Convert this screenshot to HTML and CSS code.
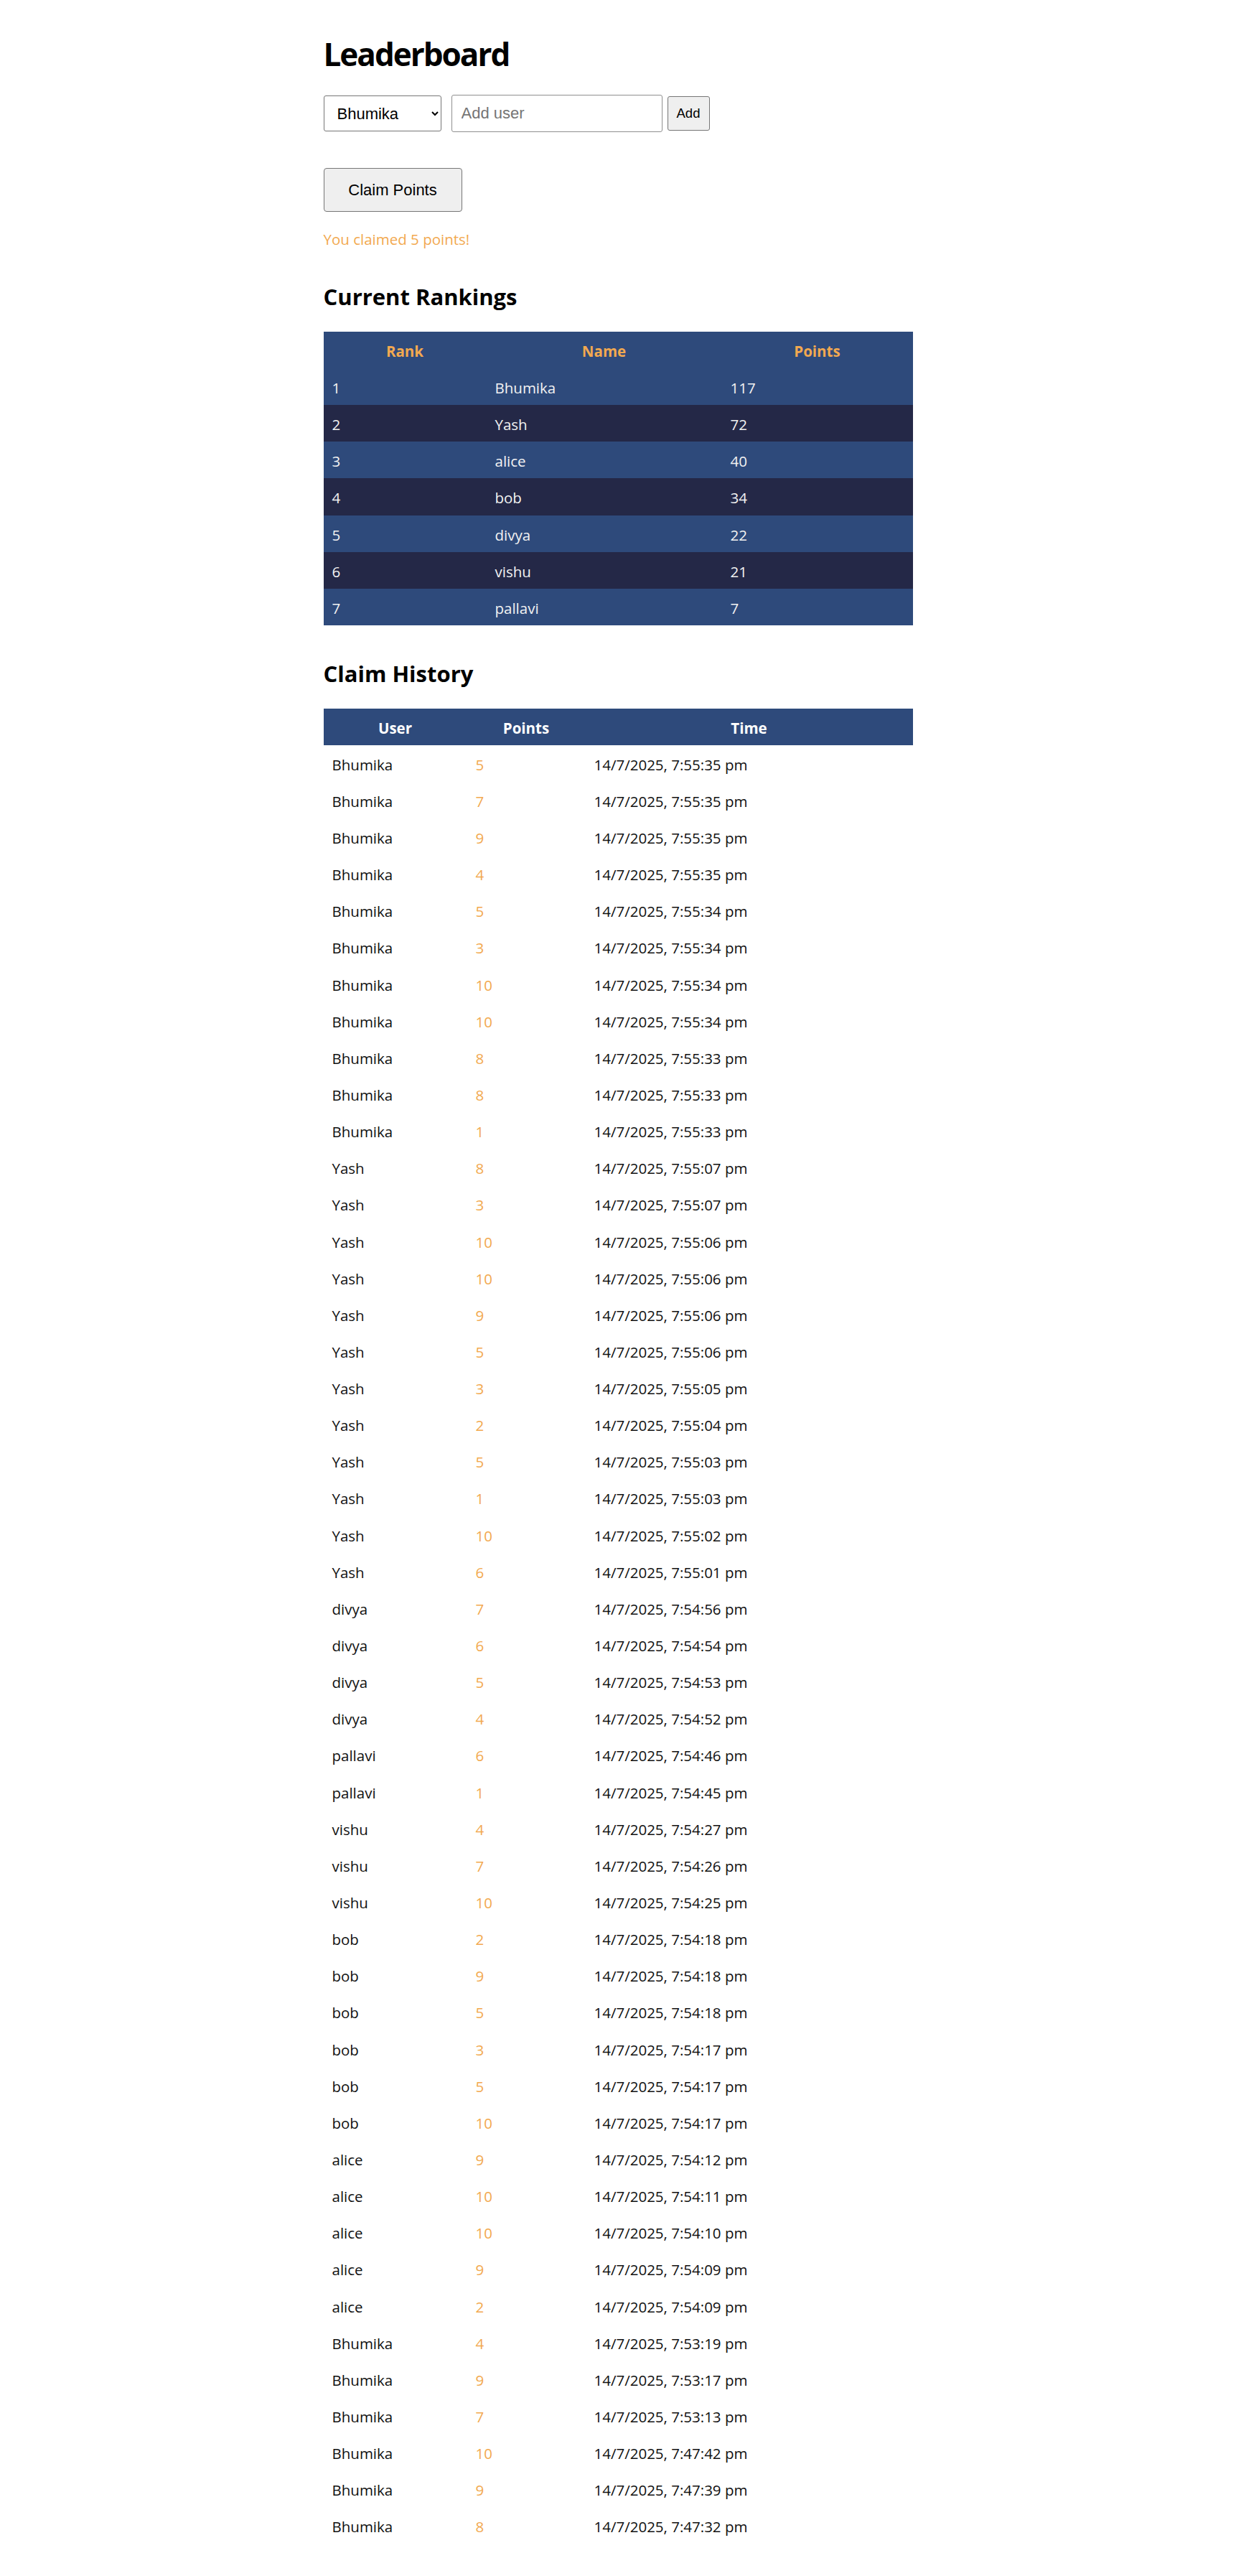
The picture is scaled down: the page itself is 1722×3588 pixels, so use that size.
FILE: index.html
```html
<!DOCTYPE html>
<html lang="en">
<head>
<meta charset="utf-8">
<title>Leaderboard</title>
<link rel="stylesheet" href="styles.css">
</head>
<body>
<div class="app">
  <h1 class="title">Leaderboard</h1>
  <div class="controls">
    <select class="user-select">
      <option>Bhumika</option>
      <option>Yash</option>
      <option>alice</option>
      <option>bob</option>
      <option>divya</option>
      <option>vishu</option>
      <option>pallavi</option>
    </select>
    <input class="user-input" type="text" placeholder="Add user">
    <button class="add-btn">Add</button>
  </div>
  <button class="claim-btn">Claim Points</button>
  <p class="message">You claimed 5 points!</p>

  <h2 class="section-title">Current Rankings</h2>
  <table class="rankings">
    <colgroup><col class="rc1"><col class="rc2"><col class="rc3"></colgroup>
    <thead><tr><th>Rank</th><th>Name</th><th>Points</th></tr></thead>
    <tbody>
      <tr><td>1</td><td>Bhumika</td><td>117</td></tr>
      <tr><td>2</td><td>Yash</td><td>72</td></tr>
      <tr><td>3</td><td>alice</td><td>40</td></tr>
      <tr><td>4</td><td>bob</td><td>34</td></tr>
      <tr><td>5</td><td>divya</td><td>22</td></tr>
      <tr><td>6</td><td>vishu</td><td>21</td></tr>
      <tr><td>7</td><td>pallavi</td><td>7</td></tr>
    </tbody>
  </table>

  <h2 class="section-title history-title">Claim History</h2>
  <table class="history">
    <colgroup><col class="hc1"><col class="hc2"><col class="hc3"></colgroup>
    <thead><tr><th>User</th><th>Points</th><th>Time</th></tr></thead>
    <tbody>
      <tr><td>Bhumika</td><td class="pts">5</td><td>14/7/2025, 7:55:35 pm</td></tr>
      <tr><td>Bhumika</td><td class="pts">7</td><td>14/7/2025, 7:55:35 pm</td></tr>
      <tr><td>Bhumika</td><td class="pts">9</td><td>14/7/2025, 7:55:35 pm</td></tr>
      <tr><td>Bhumika</td><td class="pts">4</td><td>14/7/2025, 7:55:35 pm</td></tr>
      <tr><td>Bhumika</td><td class="pts">5</td><td>14/7/2025, 7:55:34 pm</td></tr>
      <tr><td>Bhumika</td><td class="pts">3</td><td>14/7/2025, 7:55:34 pm</td></tr>
      <tr><td>Bhumika</td><td class="pts">10</td><td>14/7/2025, 7:55:34 pm</td></tr>
      <tr><td>Bhumika</td><td class="pts">10</td><td>14/7/2025, 7:55:34 pm</td></tr>
      <tr><td>Bhumika</td><td class="pts">8</td><td>14/7/2025, 7:55:33 pm</td></tr>
      <tr><td>Bhumika</td><td class="pts">8</td><td>14/7/2025, 7:55:33 pm</td></tr>
      <tr><td>Bhumika</td><td class="pts">1</td><td>14/7/2025, 7:55:33 pm</td></tr>
      <tr><td>Yash</td><td class="pts">8</td><td>14/7/2025, 7:55:07 pm</td></tr>
      <tr><td>Yash</td><td class="pts">3</td><td>14/7/2025, 7:55:07 pm</td></tr>
      <tr><td>Yash</td><td class="pts">10</td><td>14/7/2025, 7:55:06 pm</td></tr>
      <tr><td>Yash</td><td class="pts">10</td><td>14/7/2025, 7:55:06 pm</td></tr>
      <tr><td>Yash</td><td class="pts">9</td><td>14/7/2025, 7:55:06 pm</td></tr>
      <tr><td>Yash</td><td class="pts">5</td><td>14/7/2025, 7:55:06 pm</td></tr>
      <tr><td>Yash</td><td class="pts">3</td><td>14/7/2025, 7:55:05 pm</td></tr>
      <tr><td>Yash</td><td class="pts">2</td><td>14/7/2025, 7:55:04 pm</td></tr>
      <tr><td>Yash</td><td class="pts">5</td><td>14/7/2025, 7:55:03 pm</td></tr>
      <tr><td>Yash</td><td class="pts">1</td><td>14/7/2025, 7:55:03 pm</td></tr>
      <tr><td>Yash</td><td class="pts">10</td><td>14/7/2025, 7:55:02 pm</td></tr>
      <tr><td>Yash</td><td class="pts">6</td><td>14/7/2025, 7:55:01 pm</td></tr>
      <tr><td>divya</td><td class="pts">7</td><td>14/7/2025, 7:54:56 pm</td></tr>
      <tr><td>divya</td><td class="pts">6</td><td>14/7/2025, 7:54:54 pm</td></tr>
      <tr><td>divya</td><td class="pts">5</td><td>14/7/2025, 7:54:53 pm</td></tr>
      <tr><td>divya</td><td class="pts">4</td><td>14/7/2025, 7:54:52 pm</td></tr>
      <tr><td>pallavi</td><td class="pts">6</td><td>14/7/2025, 7:54:46 pm</td></tr>
      <tr><td>pallavi</td><td class="pts">1</td><td>14/7/2025, 7:54:45 pm</td></tr>
      <tr><td>vishu</td><td class="pts">4</td><td>14/7/2025, 7:54:27 pm</td></tr>
      <tr><td>vishu</td><td class="pts">7</td><td>14/7/2025, 7:54:26 pm</td></tr>
      <tr><td>vishu</td><td class="pts">10</td><td>14/7/2025, 7:54:25 pm</td></tr>
      <tr><td>bob</td><td class="pts">2</td><td>14/7/2025, 7:54:18 pm</td></tr>
      <tr><td>bob</td><td class="pts">9</td><td>14/7/2025, 7:54:18 pm</td></tr>
      <tr><td>bob</td><td class="pts">5</td><td>14/7/2025, 7:54:18 pm</td></tr>
      <tr><td>bob</td><td class="pts">3</td><td>14/7/2025, 7:54:17 pm</td></tr>
      <tr><td>bob</td><td class="pts">5</td><td>14/7/2025, 7:54:17 pm</td></tr>
      <tr><td>bob</td><td class="pts">10</td><td>14/7/2025, 7:54:17 pm</td></tr>
      <tr><td>alice</td><td class="pts">9</td><td>14/7/2025, 7:54:12 pm</td></tr>
      <tr><td>alice</td><td class="pts">10</td><td>14/7/2025, 7:54:11 pm</td></tr>
      <tr><td>alice</td><td class="pts">10</td><td>14/7/2025, 7:54:10 pm</td></tr>
      <tr><td>alice</td><td class="pts">9</td><td>14/7/2025, 7:54:09 pm</td></tr>
      <tr><td>alice</td><td class="pts">2</td><td>14/7/2025, 7:54:09 pm</td></tr>
      <tr><td>Bhumika</td><td class="pts">4</td><td>14/7/2025, 7:53:19 pm</td></tr>
      <tr><td>Bhumika</td><td class="pts">9</td><td>14/7/2025, 7:53:17 pm</td></tr>
      <tr><td>Bhumika</td><td class="pts">7</td><td>14/7/2025, 7:53:13 pm</td></tr>
      <tr><td>Bhumika</td><td class="pts">10</td><td>14/7/2025, 7:47:42 pm</td></tr>
      <tr><td>Bhumika</td><td class="pts">9</td><td>14/7/2025, 7:47:39 pm</td></tr>
      <tr><td>Bhumika</td><td class="pts">8</td><td>14/7/2025, 7:47:32 pm</td></tr>
    </tbody>
  </table>
</div>
</body>
</html>
```
FILE: styles.css
```css
html, body {
  margin: 0;
  padding: 0;
  background: #ffffff;
}

body {
  font-family: "Open Sans", "Noto Sans", sans-serif;
  color: #111111;
}

.app {
  width: 821px;
  margin: 0 auto;
  padding: 48px 0 43px;
}

.title {
  margin: 0;
  font-size: 44px;
  line-height: 54px;
  font-weight: 700;
  letter-spacing: -2px;
  color: #000;
}

.controls {
  margin-top: 30px;
  display: flex;
  align-items: center;
  height: 52px;
}

.user-select {
  box-sizing: border-box;
  width: 164px;
  height: 50px;
  font-family: "Liberation Sans", Arial, sans-serif;
  font-size: 22px;
  padding: 0 10px 0 14px;
  border: 1px solid #767676;
  border-radius: 3px;
  background: #fff;
  color: #000;
}

.user-input {
  box-sizing: border-box;
  width: 294px;
  height: 52px;
  margin-left: 14px;
  padding: 0 13px;
  font-family: "Liberation Sans", Arial, sans-serif;
  font-size: 22px;
  border: 1px solid #8f8f8f;
  border-radius: 3px;
  color: #000;
}

.user-input::placeholder {
  color: #757575;
}

.add-btn {
  box-sizing: border-box;
  width: 59px;
  height: 48px;
  margin-left: 7px;
  padding: 0;
  font-family: "Liberation Sans", Arial, sans-serif;
  font-size: 18.5px;
  color: #000;
  background: #efefef;
  border: 1px solid #767676;
  border-radius: 3px;
}

.claim-btn {
  display: block;
  box-sizing: border-box;
  width: 193px;
  height: 61px;
  margin-top: 50px;
  padding: 0;
  font-family: "Liberation Sans", Arial, sans-serif;
  font-size: 22px;
  color: #000;
  background: #efefef;
  border: 1px solid #767676;
  border-radius: 4px;
}

.message {
  margin: 24px 0 0;
  font-size: 20.5px;
  line-height: 28px;
  color: #f2a950;
}

.section-title {
  margin: 47px 0 0;
  font-size: 31px;
  line-height: 38px;
  font-weight: 700;
  color: #000;
}

.history-title {
  margin-top: 48px;
}

table {
  width: 821px;
  border-collapse: collapse;
  table-layout: fixed;
  margin-top: 30px;
  font-size: 20.5px;
  line-height: 28px;
}

th, td {
  padding: 13px 12px 10.15px;
  white-space: nowrap;
}

th {
  font-weight: 700;
  text-align: center;
  padding-bottom: 10px;
}

td {
  text-align: left;
}

.rc1 { width: 227px; }
.rc2 { width: 328px; }
.rc3 { width: 266px; }

.rankings {
  color: #f2f2f2;
}

.rankings thead tr {
  background: #2e4a7b;
}

.rankings th {
  color: #f2a950;
}

.rankings tbody tr:nth-child(odd) {
  background: #2e4a7b;
}

.rankings tbody tr:nth-child(even) {
  background: #242847;
}

.hc1 { width: 200px; }
.hc2 { width: 165px; }
.hc3 { width: 456px; }

.history {
  margin-top: 29.7px;
}

.history thead tr {
  background: #2e4a7b;
}

.history th {
  color: #ffffff;
}

.history td {
  color: #111111;
}

.history td.pts {
  color: #f2a950;
}
```
